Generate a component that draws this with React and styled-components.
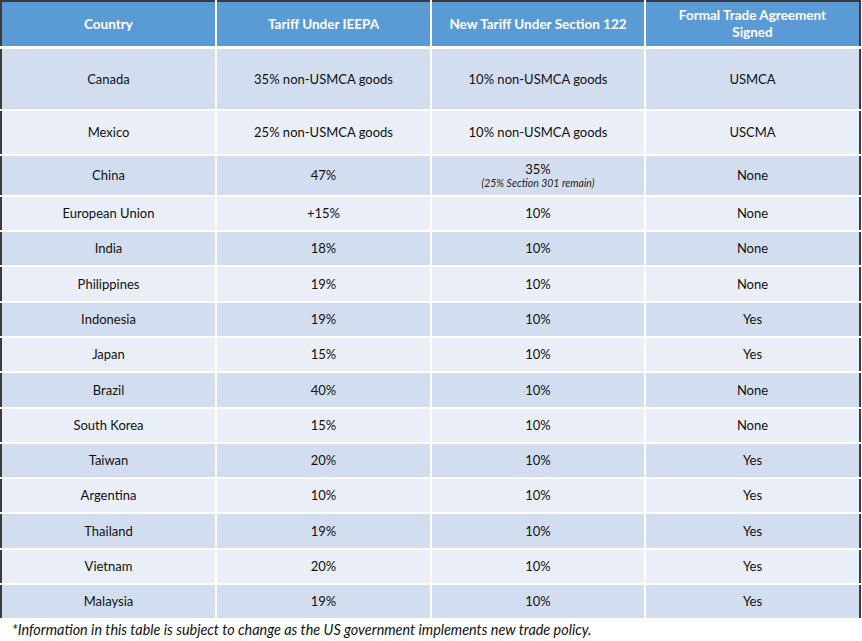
import styled, { createGlobalStyle } from "styled-components";

const rows = [
  { country: "Canada", ieepa: "35% non-USMCA goods", s122: "10% non-USMCA goods", deal: "USMCA", h: 62 },
  { country: "Mexico", ieepa: "25% non-USMCA goods", s122: "10% non-USMCA goods", deal: "USCMA", h: 45 },
  { country: "China", ieepa: "47%", s122: "35%", note: "(25% Section 301 remain)", deal: "None", h: 41 },
  { country: "European Union", ieepa: "+15%", s122: "10%", deal: "None" },
  { country: "India", ieepa: "18%", s122: "10%", deal: "None" },
  { country: "Philippines", ieepa: "19%", s122: "10%", deal: "None", h: 36 },
  { country: "Indonesia", ieepa: "19%", s122: "10%", deal: "Yes" },
  { country: "Japan", ieepa: "15%", s122: "10%", deal: "Yes" },
  { country: "Brazil", ieepa: "40%", s122: "10%", deal: "None", h: 36 },
  { country: "South Korea", ieepa: "15%", s122: "10%", deal: "None" },
  { country: "Taiwan", ieepa: "20%", s122: "10%", deal: "Yes" },
  { country: "Argentina", ieepa: "10%", s122: "10%", deal: "Yes" },
  { country: "Thailand", ieepa: "19%", s122: "10%", deal: "Yes", h: 36 },
  { country: "Vietnam", ieepa: "20%", s122: "10%", deal: "Yes" },
  { country: "Malaysia", ieepa: "19%", s122: "10%", deal: "Yes" },
];

const GlobalStyle = createGlobalStyle`
  body {
    margin: 0;
    background: #fff;
    font-family: Lato, "Open Sans", "Liberation Sans", sans-serif;
  }
`;

const Page = styled.div`
  width: 862px;
`;

const Table = styled.table`
  width: 861px;
  table-layout: fixed;
  border-collapse: collapse;
  border: 2px solid #3b3b3b;
`;

const HeadCell = styled.th`
  height: 44px;
  padding: 0 14px;
  background: #5b9bd5;
  color: #fff;
  font-size: 13.5px;
  font-weight: 700;
  line-height: 17px;
  text-align: center;
  vertical-align: middle;
  border-left: 2px solid #fff;
  border-bottom: 3px solid #fff;
  &:first-child {
    border-left: none;
  }
`;

const Row = styled.tr`
  background: ${({ $alt }) => ($alt ? "#e9eef7" : "#d2deef")};
  height: ${({ $h }) => $h || 35}px;
`;

const Cell = styled.td`
  padding: 0 8px;
  color: #111;
  font-size: 13px;
  line-height: 16px;
  text-align: center;
  vertical-align: middle;
  border: 2px solid #fff;
  &:first-child {
    border-left: none;
  }
  &:last-child {
    border-right: none;
  }
`;

const Note = styled.div`
  font-size: 10.5px;
  font-style: italic;
  line-height: 12px;
  color: #222;
`;

const Footnote = styled.p`
  margin: 0;
  padding: 1px 0 0 12px;
  font-size: 14.4px;
  font-style: italic;
  color: #111;
`;

export default function App() {
  return (
    <Page>
      <GlobalStyle />
      <Table>
        <colgroup>
          <col style={{ width: 215 }} />
          <col style={{ width: 215 }} />
          <col style={{ width: 214 }} />
          <col style={{ width: 215 }} />
        </colgroup>
        <thead>
          <tr>
            <HeadCell>Country</HeadCell>
            <HeadCell>Tariff Under IEEPA</HeadCell>
            <HeadCell>New Tariff Under Section 122</HeadCell>
            <HeadCell>Formal Trade Agreement Signed</HeadCell>
          </tr>
        </thead>
        <tbody>
          {rows.map((r, i) => (
            <Row key={r.country} $alt={i % 2 === 1} $h={r.h}>
              <Cell>{r.country}</Cell>
              <Cell>{r.ieepa}</Cell>
              <Cell>
                {r.s122}
                {r.note && <Note>{r.note}</Note>}
              </Cell>
              <Cell>{r.deal}</Cell>
            </Row>
          ))}
        </tbody>
      </Table>
      <Footnote>
        *Information in this table is subject to change as the US government implements new trade policy.
      </Footnote>
    </Page>
  );
}
